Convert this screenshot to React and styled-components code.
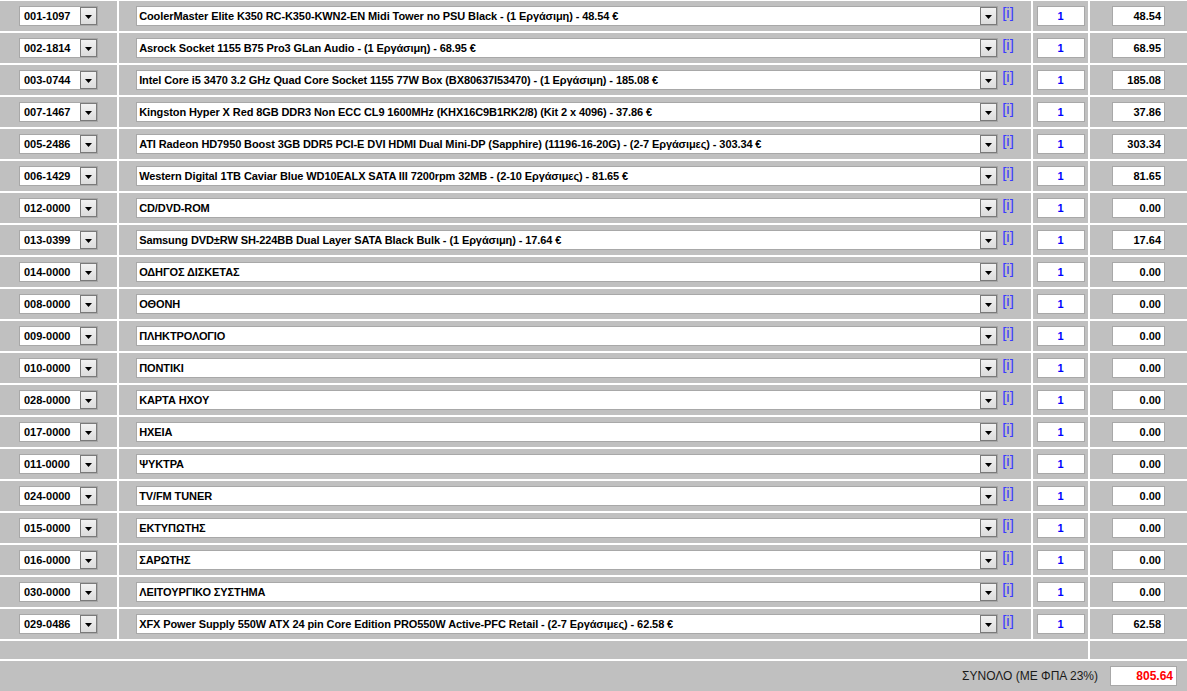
import React from "react";
import styled, { createGlobalStyle } from "styled-components";

const Global = createGlobalStyle`
  html, body { margin: 0; padding: 0; background: #ffffff; }
  body { font-family: "Liberation Sans", Arial, sans-serif; }
`;

const rows = [
  ["001-1097", "CoolerMaster Elite K350 RC-K350-KWN2-EN Midi Tower no PSU Black - (1 Εργάσιμη) - 48.54 €", "48.54"],
  ["002-1814", "Asrock Socket 1155 B75 Pro3 GLan Audio - (1 Εργάσιμη) - 68.95 €", "68.95"],
  ["003-0744", "Intel Core i5 3470 3.2 GHz Quad Core Socket 1155 77W Box (BX80637I53470) - (1 Εργάσιμη) - 185.08 €", "185.08"],
  ["007-1467", "Kingston Hyper X Red 8GB DDR3 Non ECC CL9 1600MHz (KHX16C9B1RK2/8) (Kit 2 x 4096) - 37.86 €", "37.86"],
  ["005-2486", "ATI Radeon HD7950 Boost 3GB DDR5 PCI-E DVI HDMI Dual Mini-DP (Sapphire) (11196-16-20G) - (2-7 Εργάσιμες) - 303.34 €", "303.34"],
  ["006-1429", "Western Digital 1TB Caviar Blue WD10EALX SATA III 7200rpm 32MB - (2-10 Εργάσιμες) - 81.65 €", "81.65"],
  ["012-0000", "CD/DVD-ROM", "0.00"],
  ["013-0399", "Samsung DVD±RW SH-224BB Dual Layer SATA Black Bulk - (1 Εργάσιμη) - 17.64 €", "17.64"],
  ["014-0000", "ΟΔΗΓΟΣ ΔΙΣΚΕΤΑΣ", "0.00"],
  ["008-0000", "ΟΘΟΝΗ", "0.00"],
  ["009-0000", "ΠΛΗΚΤΡΟΛΟΓΙΟ", "0.00"],
  ["010-0000", "ΠΟΝΤΙΚΙ", "0.00"],
  ["028-0000", "ΚΑΡΤΑ ΗΧΟΥ", "0.00"],
  ["017-0000", "ΗΧΕΙΑ", "0.00"],
  ["011-0000", "ΨΥΚΤΡΑ", "0.00"],
  ["024-0000", "TV/FM TUNER", "0.00"],
  ["015-0000", "ΕΚΤΥΠΩΤΗΣ", "0.00"],
  ["016-0000", "ΣΑΡΩΤΗΣ", "0.00"],
  ["030-0000", "ΛΕΙΤΟΥΡΓΙΚΟ ΣΥΣΤΗΜΑ", "0.00"],
  ["029-0486", "XFX Power Supply 550W ATX 24 pin Core Edition PRO550W Active-PFC Retail - (2-7 Εργάσιμες) - 62.58 €", "62.58"],
];

const Table = styled.div`
  display: flex;
  flex-direction: column;
  gap: 2px;
  padding-top: 1px;
  width: 1187px;
  background: #ffffff;
`;

const Row = styled.div`
  display: grid;
  grid-template-columns: 117px 912px 55px 97px;
  gap: 2px;
  height: 30px;
`;

const SpacerRow = styled.div`
  display: grid;
  grid-template-columns: 1088px 97px;
  gap: 2px;
  height: 18px;
`;

const Cell = styled.div`
  background: #c0c0c0;
  display: flex;
  align-items: center;
  justify-content: center;
`;

const ProductCell = styled(Cell)`
  align-items: flex-start;
  padding-top: 5px;
  gap: 4px;
`;

const SelectBox = styled.div`
  box-sizing: border-box;
  width: ${(p) => p.$w}px;
  height: 20px;
  background: #ffffff;
  border: 1px solid #a8a8a8;
  display: flex;
  align-items: center;
  font: bold 11px "Liberation Sans", Arial, sans-serif;
  letter-spacing: ${(p) => p.$ls || 0}px;
  color: #000000;
`;

const SelectText = styled.span`
  flex: 1;
  padding-left: ${(p) => p.$pad}px;
  white-space: nowrap;
  overflow: hidden;
`;

const DropButton = styled.span`
  box-sizing: border-box;
  width: 17px;
  height: 18px;
  border: 1px solid #7a7a7a;
  background: linear-gradient(#f2f2f2, #dcdcdc);
  display: flex;
  align-items: center;
  justify-content: center;
  padding-top: 2px;
`;

const InfoLink = styled.a`
  font: 15px "Liberation Sans", Arial, sans-serif;
  color: #3a3aff;
  text-decoration: none;
  line-height: 14px;
`;

const FieldBox = styled.div`
  box-sizing: border-box;
  width: ${(p) => p.$w}px;
  height: 20px;
  background: #ffffff;
  border: 1px solid #a8a8a8;
  display: flex;
  align-items: center;
  justify-content: ${(p) => (p.$align === "right" ? "flex-end" : "center")};
  padding-right: ${(p) => (p.$align === "right" ? 3 : 0)}px;
  font: bold ${(p) => p.$size || 11}px "Liberation Sans", Arial, sans-serif;
  color: ${(p) => p.$color || "#000000"};
`;

const TotalRow = styled.div`
  background: #c0c0c0;
  height: 30px;
  display: flex;
  align-items: center;
  justify-content: flex-end;
  padding-right: 10px;
  gap: 12px;
`;

const TotalLabel = styled.span`
  font: 12px "Liberation Sans", Arial, sans-serif;
  color: #1a1a1a;
`;

const Arrow = () => (
  <svg width="7" height="4" viewBox="0 0 7 4">
    <path d="M0 0h7L3.5 4z" fill="#000" />
  </svg>
);

const FakeSelect = ({ width, pad, ls, children }) => (
  <SelectBox $w={width} $ls={ls}>
    <SelectText $pad={pad}>{children}</SelectText>
    <DropButton>
      <Arrow />
    </DropButton>
  </SelectBox>
);

export default function App() {
  return (
    <>
      <Global />
      <Table>
        {rows.map(([code, name, price]) => (
          <Row key={code}>
            <Cell>
              <FakeSelect width={79} pad={4}>{code}</FakeSelect>
            </Cell>
            <ProductCell>
              <FakeSelect width={862} pad={2} ls={-0.1}>{name}</FakeSelect>
              <InfoLink href="#">[i]</InfoLink>
            </ProductCell>
            <Cell>
              <FieldBox $w={48} $color="#0000ff">1</FieldBox>
            </Cell>
            <Cell>
              <FieldBox $w={53} $align="right">{price}</FieldBox>
            </Cell>
          </Row>
        ))}
        <SpacerRow>
          <Cell />
          <Cell />
        </SpacerRow>
        <TotalRow>
          <TotalLabel>ΣΥΝΟΛΟ (ΜΕ ΦΠΑ 23%)</TotalLabel>
          <FieldBox $w={67} $align="right" $color="#ff0000" $size={12}>805.64</FieldBox>
        </TotalRow>
      </Table>
    </>
  );
}
